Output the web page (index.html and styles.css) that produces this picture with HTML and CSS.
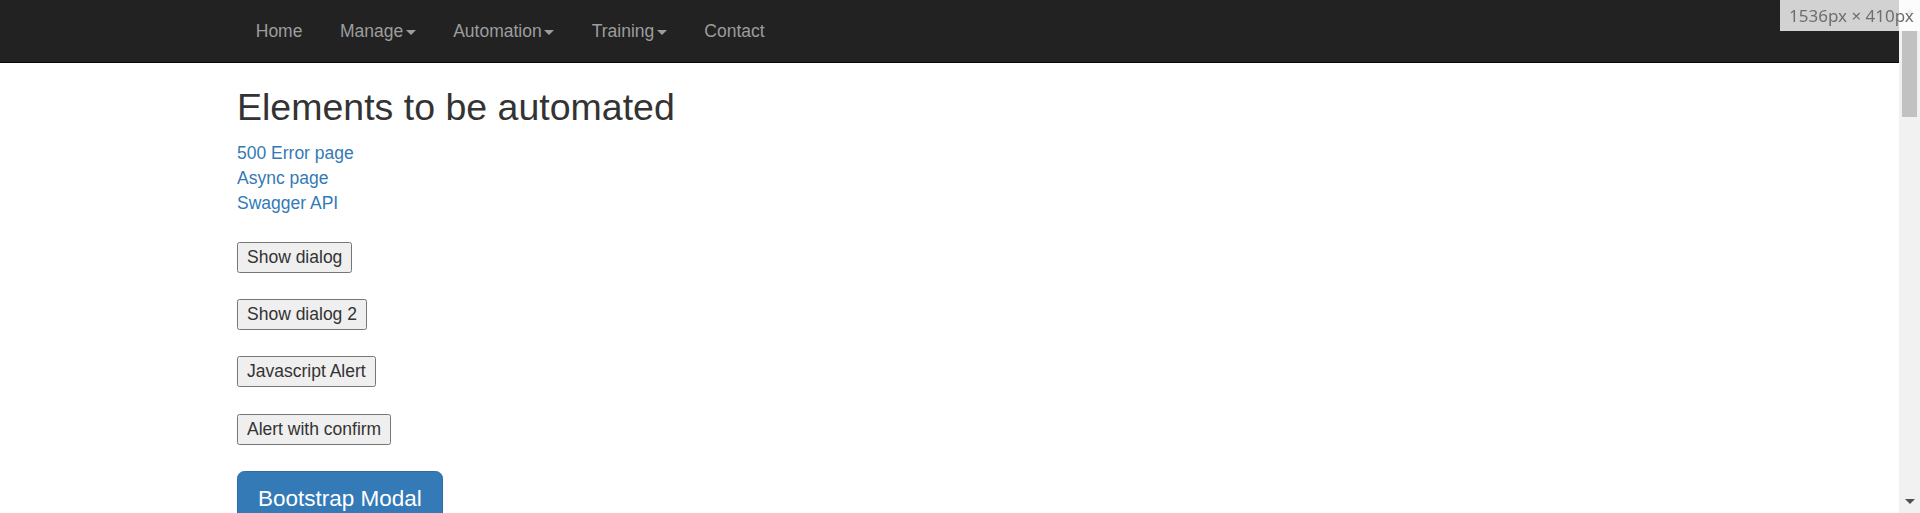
FILE: index.html
```html
<!DOCTYPE html>
<html lang="en">
<head>
<meta charset="utf-8">
<title>Elements to be automated</title>
<link rel="stylesheet" href="styles.css">
</head>
<body>
<div class="page">
  <nav class="navbar">
    <div class="container">
      <ul class="nav">
        <li><a href="#">Home</a></li>
        <li><a href="#">Manage<span class="caret"></span></a></li>
        <li><a href="#">Automation<span class="caret"></span></a></li>
        <li><a href="#">Training<span class="caret"></span></a></li>
        <li><a href="#">Contact</a></li>
      </ul>
    </div>
  </nav>
  <main class="container body">
    <h2 class="title">Elements to be automated</h2>
    <div class="links">
      <a href="#">500 Error page</a>
      <a href="#">Async page</a>
      <a href="#">Swagger API</a>
    </div>
    <div class="buttons">
      <div><button class="plain">Show dialog</button></div>
      <div><button class="plain">Show dialog 2</button></div>
      <div><button class="plain">Javascript Alert</button></div>
      <div><button class="plain">Alert with confirm</button></div>
      <div><button class="btn-primary">Bootstrap Modal</button></div>
    </div>
  </main>
</div>
<div class="scrollbar">
  <div class="sb-arrow up"></div>
  <div class="sb-thumb"></div>
  <div class="sb-arrow down"></div>
</div>
<div class="size-badge">1536px × 410px</div>
</body>
</html>
```

FILE: styles.css
```css
html, body {
  margin: 0;
  padding: 0;
  height: 100%;
  overflow: hidden;
  background: #fff;
}
body {
  font-family: "Liberation Sans", Arial, Helvetica, sans-serif;
  font-size: 17.5px;
  line-height: 25px;
  color: #333;
}
.page {
  width: 1899px;
}
.container {
  width: 1462.5px;
  margin: 0 auto;
  padding: 0 18.75px;
  box-sizing: border-box;
}
.navbar {
  background: #222;
  border-bottom: 1px solid #080808;
  height: 62px;
}
.nav {
  list-style: none;
  margin: 0;
  padding: 0;
  display: flex;
}
.nav a {
  display: block;
  padding: 19px 18.75px 18px;
  line-height: 25px;
  color: #9d9d9d;
  text-decoration: none;
}
.caret {
  display: inline-block;
  width: 0;
  height: 0;
  margin-left: 2.5px;
  vertical-align: middle;
  border-top: 5px solid #9d9d9d;
  border-left: 5px solid transparent;
  border-right: 5px solid transparent;
}
.title {
  margin: 24px 0 12.5px;
  font-size: 37.5px;
  line-height: 41.25px;
  font-weight: 500;
  color: #333;
}
.links {
  display: flex;
  flex-direction: column;
  align-items: flex-start;
}
.links a {
  color: #337ab7;
  text-decoration: none;
  line-height: 25px;
}
.buttons {
  margin-top: 26px;
  display: flex;
  flex-direction: column;
  gap: 26.25px;
}
.plain {
  font-family: inherit;
  font-size: 17.5px;
  line-height: 25px;
  color: #333;
  background: #efefef;
  border: 1px solid #767676;
  border-radius: 2.5px;
  padding: 2px 9px;
  margin: 0;
}
.btn-primary {
  font-family: inherit;
  font-size: 22.5px;
  line-height: 30px;
  color: #fff;
  background: #337ab7;
  border: 1.25px solid #2e6da4;
  border-radius: 7.5px;
  padding: 12.5px 20px;
  margin: 0;
}
.scrollbar {
  position: fixed;
  top: 0;
  right: 0;
  width: 21px;
  height: 100%;
  background: #f1f1f1;
}
.sb-thumb {
  position: absolute;
  top: 31px;
  left: 3px;
  width: 15px;
  height: 86px;
  background: #c1c1c1;
}
.sb-arrow {
  position: absolute;
  left: 6px;
  width: 0;
  height: 0;
  border-left: 5px solid transparent;
  border-right: 5px solid transparent;
}
.sb-arrow.up {
  top: 9px;
  border-bottom: 5px solid #a3a3a3;
}
.sb-arrow.down {
  bottom: 9px;
  border-top: 5px solid #505050;
}
.size-badge {
  position: fixed;
  top: 0;
  right: 0;
  width: 140px;
  height: 31px;
  box-sizing: border-box;
  padding-left: 9px;
  background: rgba(255, 255, 255, 0.8);
  color: #6e6e6e;
  font-family: "Noto Sans", "Open Sans", sans-serif;
  font-size: 17px;
  line-height: 31px;
  white-space: nowrap;
  overflow: hidden;
}
```
